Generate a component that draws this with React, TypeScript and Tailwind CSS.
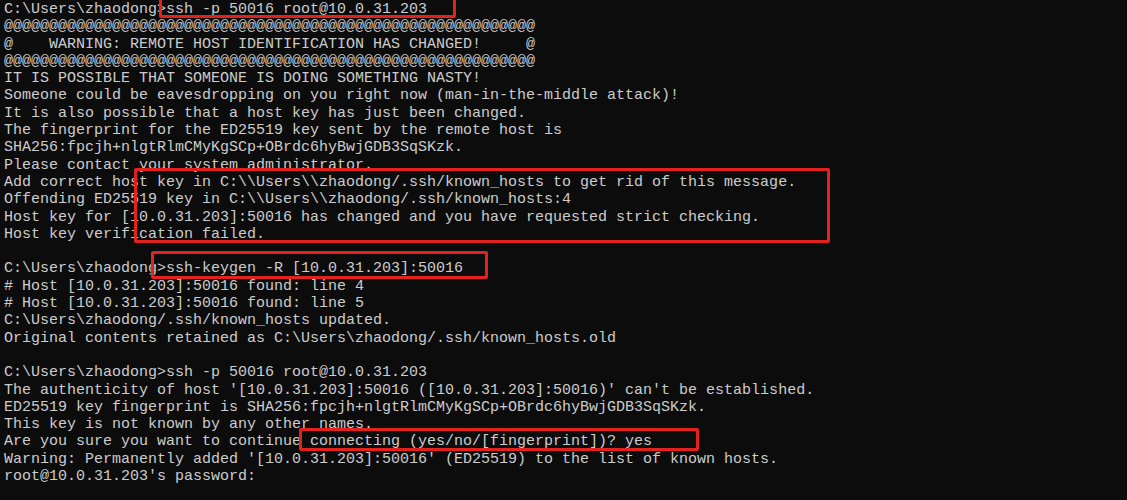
import React from 'react'

const lines: string[] = [
  'C:\\Users\\zhaodong>ssh -p 50016 root@10.0.31.203',
  '@@@@@@@@@@@@@@@@@@@@@@@@@@@@@@@@@@@@@@@@@@@@@@@@@@@@@@@@@@@',
  '@    WARNING: REMOTE HOST IDENTIFICATION HAS CHANGED!     @',
  '@@@@@@@@@@@@@@@@@@@@@@@@@@@@@@@@@@@@@@@@@@@@@@@@@@@@@@@@@@@',
  'IT IS POSSIBLE THAT SOMEONE IS DOING SOMETHING NASTY!',
  'Someone could be eavesdropping on you right now (man-in-the-middle attack)!',
  'It is also possible that a host key has just been changed.',
  'The fingerprint for the ED25519 key sent by the remote host is',
  'SHA256:fpcjh+nlgtRlmCMyKgSCp+OBrdc6hyBwjGDB3SqSKzk.',
  'Please contact your system administrator.',
  'Add correct host key in C:\\\\Users\\\\zhaodong/.ssh/known_hosts to get rid of this message.',
  'Offending ED25519 key in C:\\\\Users\\\\zhaodong/.ssh/known_hosts:4',
  'Host key for [10.0.31.203]:50016 has changed and you have requested strict checking.',
  'Host key verification failed.',
  '',
  'C:\\Users\\zhaodong>ssh-keygen -R [10.0.31.203]:50016',
  '# Host [10.0.31.203]:50016 found: line 4',
  '# Host [10.0.31.203]:50016 found: line 5',
  'C:\\Users\\zhaodong/.ssh/known_hosts updated.',
  'Original contents retained as C:\\Users\\zhaodong/.ssh/known_hosts.old',
  '',
  'C:\\Users\\zhaodong>ssh -p 50016 root@10.0.31.203',
  "The authenticity of host '[10.0.31.203]:50016 ([10.0.31.203]:50016)' can't be established.",
  'ED25519 key fingerprint is SHA256:fpcjh+nlgtRlmCMyKgSCp+OBrdc6hyBwjGDB3SqSKzk.',
  'This key is not known by any other names.',
  'Are you sure you want to continue connecting (yes/no/[fingerprint])? yes',
  "Warning: Permanently added '[10.0.31.203]:50016' (ED25519) to the list of known hosts.",
  "root@10.0.31.203's password:",
]

export default function App() {
  return (
    <div className="relative w-[1127px] h-[500px] overflow-hidden bg-[#0c0c0c]">
      {/* terminal output */}
      <div className="pt-[1px] pl-[4px] text-[#cccccc] text-[15px] leading-[17.3px] font-['Liberation_Mono','DejaVu_Sans_Mono',monospace]">
        {lines.map((l, i) => (
          <div key={i} className="whitespace-pre h-[17.3px]">
            {l}
          </div>
        ))}
      </div>

      {/* red annotation boxes */}
      <div className="absolute left-[159px] top-[-4px] w-[297px] h-[22px] border-[3px] border-[#e3211d] rounded-[2px]" />
      <div className="absolute left-[134px] top-[168px] w-[696px] h-[75px] border-[3px] border-[#e3211d] rounded-[2px]" />
      <div className="absolute left-[151px] top-[251px] w-[337px] h-[28px] border-[3px] border-[#e3211d] rounded-[2px]" />
      <div className="absolute left-[299px] top-[428px] w-[400px] h-[23px] border-[3px] border-[#e3211d] rounded-[2px]" />
    </div>
  )
}
